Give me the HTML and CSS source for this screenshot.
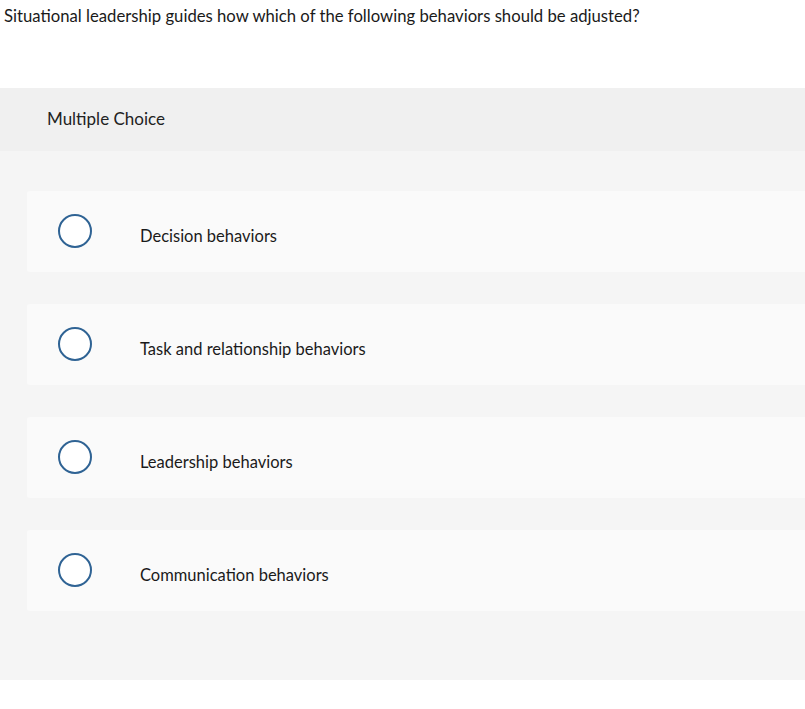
FILE: index.html
```html
<!DOCTYPE html>
<html>
<head>
<meta charset="utf-8">
<link rel="stylesheet" href="styles.css">
</head>
<body>
<p class="question">Situational leadership guides how which of the following behaviors should be adjusted?</p>
<div class="panel">
  <div class="panel-head">Multiple Choice</div>
  <div class="choices">
    <div class="choice"><span class="radio"></span><span class="label">Decision behaviors</span></div>
    <div class="choice"><span class="radio"></span><span class="label">Task and relationship behaviors</span></div>
    <div class="choice"><span class="radio"></span><span class="label">Leadership behaviors</span></div>
    <div class="choice"><span class="radio"></span><span class="label">Communication behaviors</span></div>
  </div>
</div>
</body>
</html>
```

FILE: styles.css
```css
html, body {
  margin: 0;
  padding: 0;
  background: #ffffff;
}
body {
  font-family: Lato, "Open Sans", sans-serif;
  color: #1a1a1a;
  width: 805px;
  overflow: hidden;
}
.question {
  margin: 0;
  padding: 5px 0 0 4px;
  font-size: 16.7px;
  line-height: 22px;
  height: 83px;
}
.panel {
  background: #f5f5f5;
}
.panel-head {
  background: #f0f0f0;
  height: 63px;
  padding-left: 47px;
  font-size: 17px;
  line-height: 61px;
  color: #222;
}
.choices {
  display: flex;
  flex-direction: column;
  gap: 32px;
  padding: 40px 0 69px 27px;
}
.choice {
  display: flex;
  align-items: center;
  height: 81px;
  background: #fafafa;
  border-radius: 3px 0 0 3px;
}
.radio {
  box-sizing: border-box;
  width: 34px;
  height: 34px;
  border-radius: 50%;
  border: 2px solid #2f6394;
  background: #fff;
  margin-left: 31px;
  margin-right: 48px;
  margin-top: -2px;
}
.label {
  font-size: 16.5px;
  color: #1a1a1a;
  margin-top: 8px;
}
```
